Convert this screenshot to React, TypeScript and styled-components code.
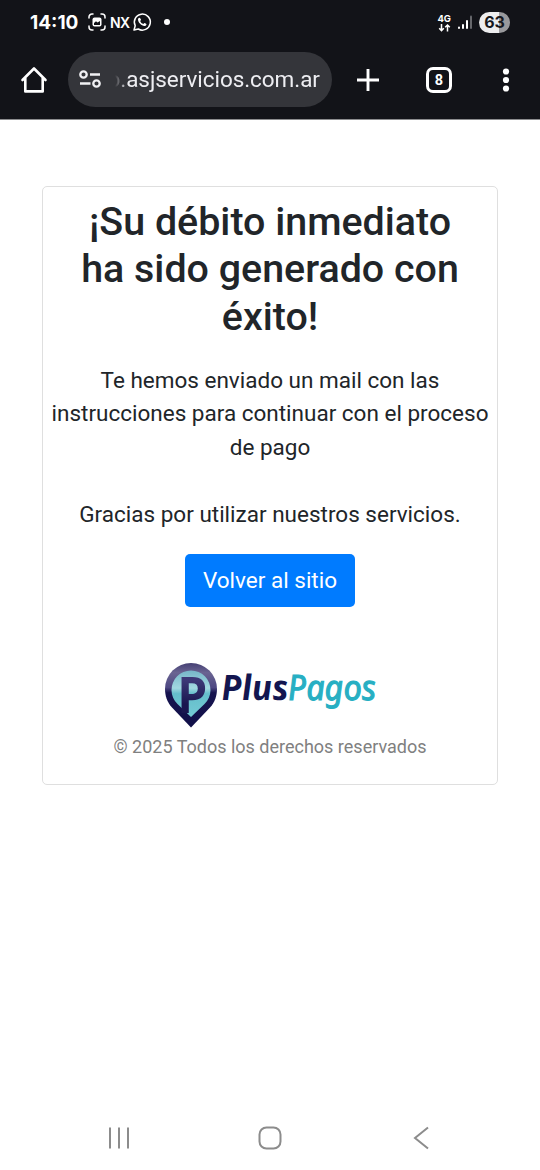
import React from "react";
import styled, { createGlobalStyle } from "styled-components";

const GlobalStyle = createGlobalStyle`
  * { box-sizing: border-box; }
  body { margin: 0; background: #fff; font-family: Roboto, "Liberation Sans", sans-serif; color: #212529; }
`;

const Screen = styled.div`
  width: 540px;
  height: 1170px;
  display: flex;
  flex-direction: column;
  overflow: hidden;
  background: #fff;
`;

const Chrome = styled.header`
  height: 120px;
  flex: none;
  background: #121318;
  border-bottom: 1px solid #8b8c8e;
  color: #fff;
`;

const StatusBar = styled.div`
  height: 44px;
  padding: 0 30px;
  display: flex;
  justify-content: space-between;
  align-items: center;
`;

const StatusGroup = styled.div<{ $gap: number }>`
  display: flex;
  align-items: center;
  gap: ${(p) => p.$gap}px;
`;

const Clock = styled.span`
  width: 53px;
  padding-top: 1px;
  font: 700 19px/24px Inter, sans-serif;
  letter-spacing: 0;
  white-space: nowrap;
`;

const Carrier = styled.span`
  width: 18px;
  margin-left: -1px;
  padding-top: 1px;
  font: 600 14px/20px Inter, sans-serif;
  letter-spacing: -0.7px;
`;

const Dot = styled.span`
  width: 6px;
  height: 6px;
  margin-left: 8px;
  border-radius: 50%;
  background: #fff;
`;

const Network = styled.div`
  display: flex;
  flex-direction: column;
  align-items: center;
  padding-top: 1px;
  font: 700 9.5px/10px Inter, sans-serif;
`;

const Battery = styled.div`
  width: 31px;
  height: 21px;
  border-radius: 11px;
  background: linear-gradient(90deg, #ededee 63%, #99999c 63%);
  color: #17181c;
  font: 700 16px/21px Inter, sans-serif;
  text-align: center;
`;

const Toolbar = styled.div`
  height: 71px;
  padding: 0 31px 0 20px;
  display: flex;
  align-items: center;
`;

const AddressBar = styled.div`
  width: 264px;
  height: 55px;
  flex: none;
  margin: 0 24.5px 0 19.5px;
  padding-left: 11px;
  display: flex;
  align-items: center;
  border-radius: 28px;
  background: #34353a;
`;

const Url = styled.span`
  height: 32px;
  margin-left: 7px;
  font-size: 22.5px;
  line-height: 31px;
  letter-spacing: -0.05px;
  color: #eeeef2;
  white-space: nowrap;
  mask-image: linear-gradient(90deg, transparent 7px, #000 20px);
`;

const TabCount = styled.div`
  width: 26px;
  height: 26px;
  flex: none;
  margin: 0 auto 0 46px;
  border: 2.5px solid #fff;
  border-width: 3px;
  border-radius: 7px;
  font: 700 14.5px/21px Roboto, sans-serif;
  text-align: center;
`;

const Page = styled.main`
  flex: 1;
  padding: 66px 42px 0;
`;

const Card = styled.section`
  height: 599px;
  padding: 11px 8px 0;
  display: flex;
  flex-direction: column;
  align-items: center;
  border: 1px solid #dfdfdf;
  border-radius: 5px;
  text-align: center;
`;

const Title = styled.h2`
  margin: 0;
  font-size: 39.4px;
  font-weight: 500;
  line-height: 47.4px;
`;

const Message = styled.p<{ $top: number }>`
  margin: ${(p) => p.$top}px 0 0;
  font-size: 22.5px;
  line-height: 33.75px;
  white-space: nowrap;
`;

const Button = styled.button`
  width: 170px;
  height: 53px;
  margin: 22px 0 55px;
  padding: 0;
  border: 0;
  border-radius: 5px;
  background: #007bff;
  color: #fff;
  font: 400 22.5px/51px Roboto, sans-serif;
`;

const Copyright = styled.small`
  margin-top: 5px;
  font-size: 18px;
  line-height: 27px;
  color: #808080;
  white-space: nowrap;
`;

const NavBar = styled.nav`
  height: 64px;
  flex: none;
  padding: 0 107px;
  display: flex;
  justify-content: space-between;
  align-items: center;
`;

const Icon = styled.svg`
  display: block;
  flex: none;
  overflow: visible;
`;

const CaptureIcon = () => (
  <Icon width="18" height="18" viewBox="0 0 18 18" fill="none" stroke="#fff" strokeWidth="1.5" strokeLinecap="round">
    <path d="M1 5V4a3 3 0 0 1 3-3h1M13 1h1a3 3 0 0 1 3 3v1M17 13v1a3 3 0 0 1-3 3h-1M5 17H4a3 3 0 0 1-3-3v-1" />
    <rect x="4.500" y="4.500" width="9" height="9" rx="2" fill="#fff" stroke="none" />
    <path d="M6 12V10l2-1.800 1.500 1.200L12 8v4Z" fill="#121318" stroke="none" />
  </Icon>
);

const WhatsAppIcon = () => (
  <Icon width="18" height="18" viewBox="0 0 18 18" fill="none" stroke="#fff" strokeWidth="1.5">
    <path d="M1 17l1.200-4.300A8 8 0 1 1 5.300 16Z" strokeLinejoin="round" />
    <path d="M6.300 4.700c-.8.100-1.400 1-1.300 2.100.3 2.900 3.400 6 6.400 6.200 1 .1 2-.7 2.100-1.600.1-.5-1.800-1.500-2.200-1.300l-.9 1c-1.500-.5-2.700-1.700-3.200-3.100l.8-.9c.2-.4-.8-2.400-1.700-2.400Z" fill="#fff" stroke="none" />
  </Icon>
);

const DataArrows = () => (
  <Icon width="13" height="8" viewBox="0 0 13 8" fill="none" stroke="#fff" strokeWidth="1.5">
    <path d="M3.500 0v6.500M1.200 4.300l2.300 2.300 2.300-2.300M9.500 7.500V1M7.200 3.300L9.500 1l2.300 2.300" />
  </Icon>
);

const SignalIcon = () => (
  <Icon width="14" height="15" viewBox="0 0 14 15" strokeWidth="2" strokeLinecap="round" stroke="#fff">
    <path d="M1 12.500v.6M5 10v3.100M9 6v7.100" />
    <path d="M13 1.500v11.600" stroke="#66676b" />
  </Icon>
);

const HomeIcon = () => (
  <Icon width="28" height="28" viewBox="0 0 28 28" fill="none" stroke="#fff" strokeWidth="2.6" strokeLinejoin="round" strokeLinecap="round">
    <path d="M2.500 14L14 2.500 25.500 14M5.300 12v13.400h17.400V12" />
  </Icon>
);

const TuneIcon = () => (
  <Icon width="22" height="20" viewBox="0 0 22 20" fill="none" stroke="#f1f1f4" strokeWidth="2.3">
    <circle cx="4.500" cy="4.500" r="3.200" />
    <circle cx="17.500" cy="13.500" r="3.200" />
    <path d="M11 4.500H21M1 13.500H11.500" />
  </Icon>
);

const PlusIcon = () => (
  <Icon width="24" height="24" viewBox="0 0 24 24" stroke="#fff" strokeWidth="2.900">
    <path d="M12 1v22M1 12h22" />
  </Icon>
);

const MoreIcon = () => (
  <Icon width="6" height="24" viewBox="0 0 6 24" fill="#fff">
    <circle cx="3" cy="3.500" r="3.100" />
    <circle cx="3" cy="12" r="3.100" />
    <circle cx="3" cy="20.500" r="3.100" />
  </Icon>
);

const Logo = () => (
  <Icon width="212" height="66" viewBox="0 0 212 66" role="img" aria-label="PlusPagos">
    <defs>
      <linearGradient id="pin" x1="0" y1="0" x2="0" y2="1">
        <stop offset="0" stopColor="#454073" />
        <stop offset=".15" stopColor="#6a6492" />
        <stop offset=".38" stopColor="#4e4883" />
        <stop offset=".46" stopColor="#17144f" />
        <stop offset="1" stopColor="#100f48" />
      </linearGradient>
      <linearGradient id="disc" x1="0" y1="0" x2="0" y2="1">
        <stop offset="0" stopColor="#76b6c8" />
        <stop offset=".38" stopColor="#a2d8e1" />
        <stop offset=".5" stopColor="#65bdcb" />
        <stop offset="1" stopColor="#74cbd5" />
      </linearGradient>
      <linearGradient id="letter" x1="0" y1="0" x2="0" y2="1">
        <stop offset=".3" stopColor="#3d3877" />
        <stop offset=".65" stopColor="#19164f" />
      </linearGradient>
    </defs>
    <path d="M27 65.500L8 45.500C3 40 1 33.500 1 27a26 26 0 0 1 52 0c0 6.500-2 13-7 18.500Z" fill="url(#pin)" />
    <path d="M27 55L13.500 42A19.500 19.500 0 1 1 40.500 42Z" fill="url(#disc)" />
    <text x="13.200" y="51" fontFamily="Open Sans" fontWeight="700" fontSize="50" textLength="30" lengthAdjust="spacingAndGlyphs" fill="url(#letter)">P</text>
    <g transform="translate(0 38) skewX(4)" fontFamily="Noto Sans" fontStyle="italic" fontSize="35">
      <text x="58" y="0" fontWeight="700" textLength="67" lengthAdjust="spacingAndGlyphs" fill="#131650">Plus</text>
      <text x="124.500" y="0" fontWeight="400" textLength="88" lengthAdjust="spacingAndGlyphs" fill="#27afc3" stroke="#27afc3" strokeWidth="1.200">Pagos</text>
    </g>
  </Icon>
);

const RecentsIcon = () => (
  <Icon width="24" height="24" viewBox="0 0 24 24" stroke="#8c8c8c" strokeWidth="2">
    <path d="M3 1.500v21M12 1.500v21M21 1.500v21" />
  </Icon>
);

const HomeButtonIcon = () => (
  <Icon width="24" height="24" viewBox="0 0 24 24" fill="none" stroke="#8c8c8c" strokeWidth="2">
    <rect x="1.500" y="1.500" width="21" height="21" rx="7" />
  </Icon>
);

const BackIcon = () => (
  <Icon width="24" height="24" viewBox="0 0 24 24" fill="none" stroke="#8c8c8c" strokeWidth="2">
    <path d="M19 1.500L6 12l13 10.500" />
  </Icon>
);

export default function App() {
  return (
    <Screen>
      <GlobalStyle />
      <Chrome>
        <StatusBar>
          <StatusGroup $gap={5}>
            <Clock>14:10</Clock>
            <CaptureIcon />
            <Carrier>NX</Carrier>
            <WhatsAppIcon />
            <Dot />
          </StatusGroup>
          <StatusGroup $gap={7}>
            <Network>
              4G
              <DataArrows />
            </Network>
            <SignalIcon />
            <Battery>63</Battery>
          </StatusGroup>
        </StatusBar>
        <Toolbar>
          <HomeIcon />
          <AddressBar>
            <TuneIcon />
            <Url>o.asjservicios.com.ar</Url>
          </AddressBar>
          <PlusIcon />
          <TabCount>8</TabCount>
          <MoreIcon />
        </Toolbar>
      </Chrome>
      <Page>
        <Card>
          <Title>
            ¡Su débito inmediato
            <br />
            ha sido generado con
            <br />
            éxito!
          </Title>
          <Message $top={23.3}>
            Te hemos enviado un mail con las
            <br />
            instrucciones para continuar con el proceso
            <br />
            de pago
          </Message>
          <Message $top={33.7}>Gracias por utilizar nuestros servicios.</Message>
          <Button>Volver al sitio</Button>
          <Logo />
          <Copyright>© 2025 Todos los derechos reservados</Copyright>
        </Card>
      </Page>
      <NavBar>
        <RecentsIcon />
        <HomeButtonIcon />
        <BackIcon />
      </NavBar>
    </Screen>
  );
}
